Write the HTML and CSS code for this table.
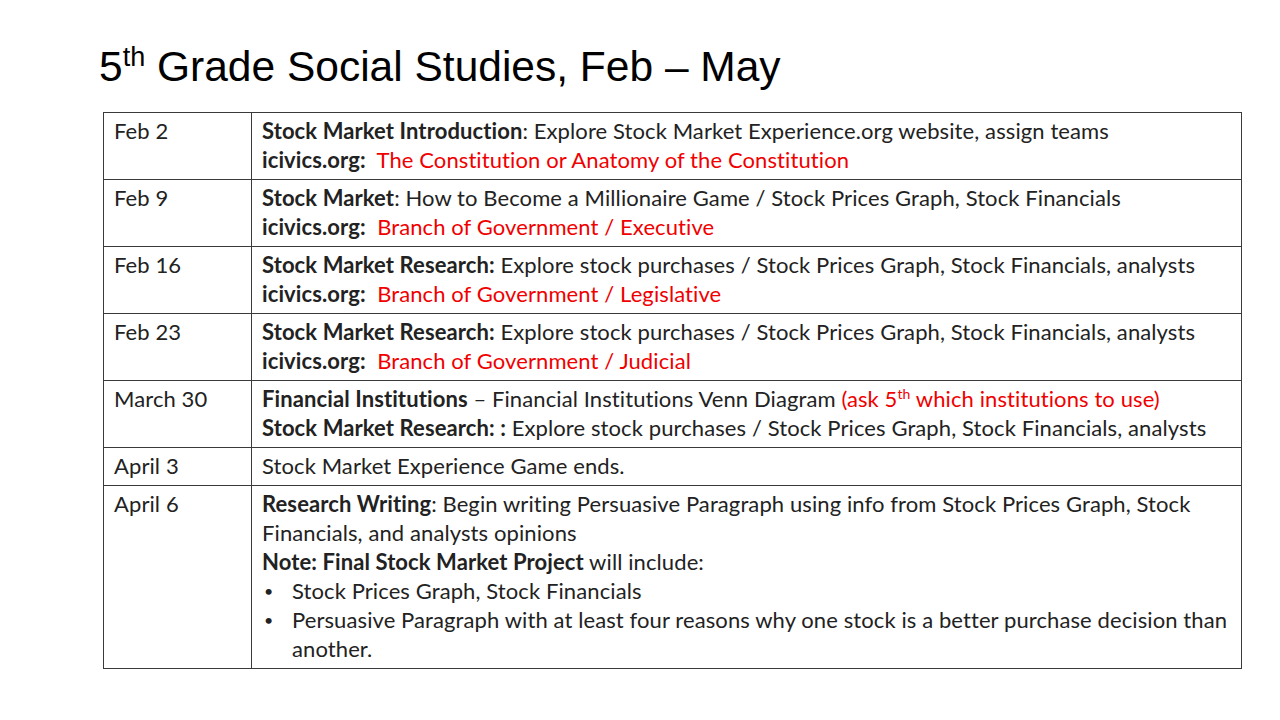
FILE: index.html
```html
<!DOCTYPE html>
<html>
<head>
<meta charset="utf-8">
<link rel="stylesheet" href="styles.css">
</head>
<body>
<div class="slide">
  <h1 class="title">5<sup>th</sup> Grade Social Studies, Feb – May</h1>
  <table class="plan">
    <colgroup><col class="c-date"><col class="c-desc"></colgroup>
    <tr>
      <td>Feb 2</td>
      <td><b>Stock Market Introduction</b>: Explore Stock Market Experience.org website, assign teams<br>
        <b>icivics.org:</b>&nbsp; <span class="red">The Constitution or Anatomy of the Constitution</span></td>
    </tr>
    <tr>
      <td>Feb 9</td>
      <td><b>Stock Market</b>: How to Become a Millionaire Game / Stock Prices Graph, Stock Financials<br>
        <b>icivics.org:</b>&nbsp; <span class="red">Branch of Government / Executive</span></td>
    </tr>
    <tr>
      <td>Feb 16</td>
      <td><b>Stock Market Research:</b> Explore stock purchases / Stock Prices Graph, Stock Financials, analysts<br>
        <b>icivics.org:</b>&nbsp; <span class="red">Branch of Government / Legislative</span></td>
    </tr>
    <tr>
      <td>Feb 23</td>
      <td><b>Stock Market Research:</b> Explore stock purchases / Stock Prices Graph, Stock Financials, analysts<br>
        <b>icivics.org:</b>&nbsp; <span class="red">Branch of Government / Judicial</span></td>
    </tr>
    <tr>
      <td>March 30</td>
      <td><b>Financial Institutions</b> – Financial Institutions Venn Diagram <span class="red">(ask 5<sup>th</sup> which institutions to use)</span><br>
        <b>Stock Market Research: :</b> Explore stock purchases / Stock Prices Graph, Stock Financials, analysts</td>
    </tr>
    <tr>
      <td>April 3</td>
      <td>Stock Market Experience Game ends.</td>
    </tr>
    <tr>
      <td>April 6</td>
      <td><b>Research Writing</b>: Begin writing Persuasive Paragraph using info from Stock Prices Graph, Stock Financials, and analysts opinions<br>
        <b>Note: Final Stock Market Project</b> will include:
        <ul class="bullets">
          <li>Stock Prices Graph, Stock Financials</li>
          <li>Persuasive Paragraph with at least four reasons why one stock is a better purchase decision than another.</li>
        </ul>
      </td>
    </tr>
  </table>
</div>
</body>
</html>
```
FILE: styles.css
```css
html, body {
  margin: 0;
  padding: 0;
  background: #ffffff;
}
.slide {
  width: 1280px;
  height: 720px;
  overflow: hidden;
}
.title {
  margin: 42px 0 21px 99px;
  font-family: "Liberation Sans", Arial, sans-serif;
  font-weight: normal;
  font-size: 42.5px;
  line-height: 49px;
  color: #000;
}
.title sup {
  font-size: 27px;
  line-height: 0;
  vertical-align: 15px;
}
.plan {
  margin-left: 103px;
  width: 1139px;
  border-collapse: collapse;
  table-layout: fixed;
  font-family: Lato, "Liberation Sans", sans-serif;
  font-size: 22px;
  line-height: 29px;
  letter-spacing: 0.1px;
  color: #222222;
}
.c-date { width: 148px; }
.plan td {
  border: 1px solid #3a3a3a;
  padding: 3px 8px 5px 10px;
  vertical-align: top;
}
.plan b { font-weight: bold; }
.red { color: #f00000; }
.plan sup {
  font-size: 14px;
  line-height: 0;
  vertical-align: 8px;
}
.bullets {
  margin: 0;
  padding: 0;
  list-style: none;
}
.bullets li {
  position: relative;
  padding-left: 30px;
}
.bullets li::before {
  content: "•";
  position: absolute;
  left: 2px;
  top: 0;
  font-size: 16px;
}
```
